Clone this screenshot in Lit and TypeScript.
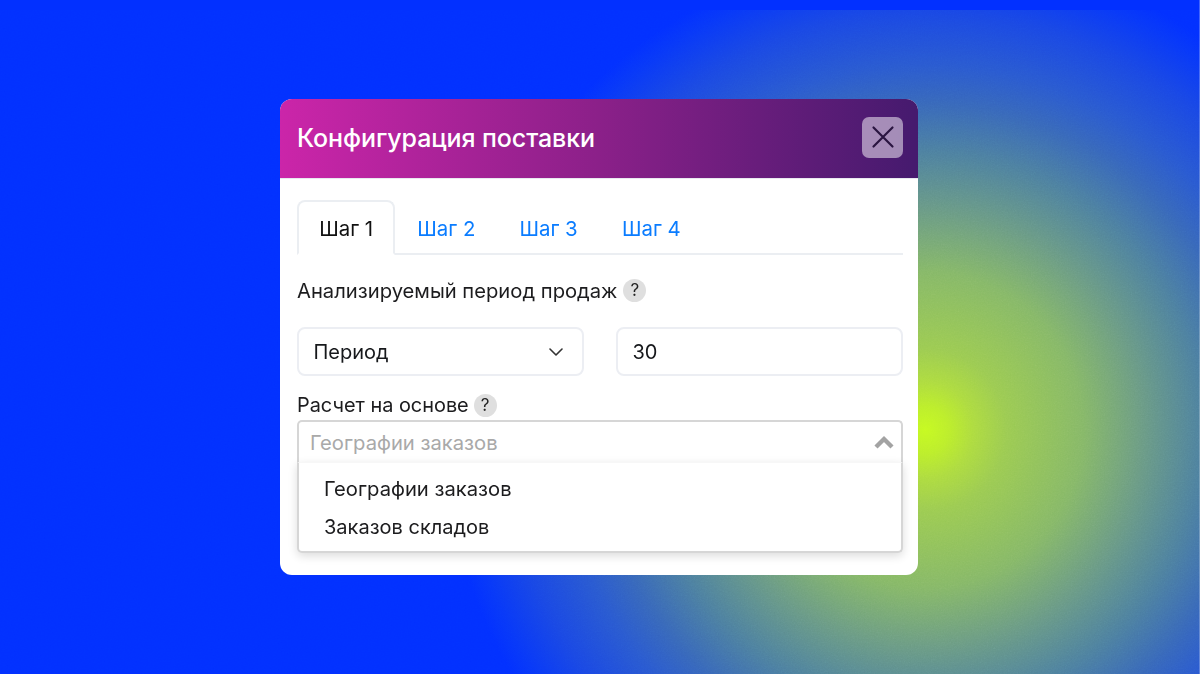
import { LitElement, html, css } from "lit";
import { customElement } from "lit/decorators.js";

@customElement("app-root")
export class AppRoot extends LitElement {
  static styles = css`
    :host { display: block; width: 1200px; height: 674px; overflow: hidden; }
    * { box-sizing: border-box; }
    .page {
      width: 1200px; height: 674px; position: relative;
      display: flex; justify-content: flex-start; align-items: flex-start;
      padding: 99px 0 0 280px;
      background:
        radial-gradient(circle 480px at 925px 430px, #c6fa22 0%, #bcee2c 5%, #aedc40 10%, #9ccb52 17%, #86b868 33%, #6c9c84 45%, #4d80a0 58%, #3868ba 68%, #2a5ad0 76%, #1a48e4 87%, #0838f8 96%, #0230ff 100%),
        #0230ff;
      font-family: Inter, "Noto Sans", sans-serif;
    }
    .noise { position: absolute; inset: 0; width: 100%; height: 100%; opacity: 0.12; mix-blend-mode: overlay; }
    .band { position: absolute; left: 0; right: 0; top: 0; height: 10px; background: #0230ff; }
    .edge { position: absolute; right: 0; top: 0; bottom: 0; width: 1px; background: rgba(255,255,255,0.25); }
    .modal {
      position: relative; width: 638px; height: 476px; background: #fff; border-radius: 12px;
      display: flex; flex-direction: column; overflow: hidden;
    }
    .head {
      height: 80px; flex: none; display: flex; align-items: center; justify-content: space-between;
      padding: 0 15px 1px 17px; color: #fff;
      background: linear-gradient(90deg, #cb25a9 0%, #8b2089 50%, #451a6e 100%);
      border-bottom: 1px solid #e8e9f0;
    }
    .title { font-size: 25px; font-weight: 500; letter-spacing: -0.1px; }
    .close {
      width: 41px; height: 41px; border-radius: 7px; background: rgba(255,255,255,0.5); margin-bottom: 2px;
      display: flex; align-items: center; justify-content: center;
    }
    .close svg { width: 26px; height: 26px; display: block; }
    .body { padding: 21px 15px 0 17px; flex: 1; display: flex; flex-direction: column; }
    .tabs { display: flex; height: 55px; border-bottom: 2px solid #ebeef2; }
    .tab {
      height: 55px; padding: 1px 20px 0 20.2px; display: flex; align-items: center; font-size: 20.4px; color: #0a7cff;
      border: 2px solid transparent; border-radius: 8px 8px 0 0;
    }
    .tab.active { color: #111; border-color: #ebeef2; border-bottom-color: #fff; }
    .label { display: flex; align-items: center; gap: 6px; font-size: 20.2px; color: #1c1c1e; height: 24px; }
    .q {
      width: 23px; height: 23px; border-radius: 50%; background: #dfdfdf; color: #222; font-size: 17px; font-weight: 400;
      display: flex; align-items: center; justify-content: center;
    }
    .l1 { margin-top: 23px; }
    .row { display: grid; grid-template-columns: 287px 287px; gap: 32px; margin-top: 25px; }
    .field {
      height: 49px; border: 2px solid #eceef3; border-radius: 8px; display: flex; align-items: center;
      justify-content: space-between; font-size: 20px; color: #16181b; padding: 0 19px 0 14.5px;
    }
    .field svg { width: 14px; height: 8px; display: block; }
    .l2 { margin-top: 17px; font-size: 19.9px; gap: 5px; }
    .combo { position: relative; margin-top: 3px; height: 132px; }
    .control {
      height: 44px; border: 2px solid #d6d6d6; border-bottom: none; border-radius: 5px 5px 0 0; padding: 0 6px 2px 11px;
      display: flex; align-items: center; justify-content: space-between; color: #a9a9a9; font-size: 20.2px;
      background: #fff;
    }
    .control svg { width: 22px; height: 14px; display: block; }
    .menu {
      position: absolute; left: 0; right: 0; top: 42px; height: 91px; background: #fff; border-radius: 0 0 5px 5px;
      border: 2px solid #d6d6d6; border-top: 1px solid #f7f7f7;
      box-shadow: 0 3px 10px rgba(0,0,0,0.14);
      padding: 6px 0 0 25px; font-size: 20.2px; color: #1c1c1e;
    }
    .item { height: 38.5px; display: flex; align-items: center; }
    .item.alt { font-size: 20px; }
  `;

  render() {
    return html`
      <div class="page">
        <svg class="noise" aria-hidden="true">
          <filter id="n"><feTurbulence type="fractalNoise" baseFrequency="0.7" numOctaves="2" stitchTiles="stitch"></feTurbulence><feColorMatrix type="saturate" values="0"></feColorMatrix></filter>
          <rect width="100%" height="100%" filter="url(#n)"></rect>
        </svg>
        <div class="band"></div>
        <div class="edge"></div>
        <div class="modal">
          <div class="head">
            <div class="title">Конфигурация поставки</div>
            <div class="close">
              <svg viewBox="0 0 26 26" fill="none" stroke="#2a1540" stroke-width="2.2" stroke-linecap="round"><path d="M3.5 3.5 L22.5 22.5 M22.5 3.5 L3.5 22.5"></path></svg>
            </div>
          </div>
          <div class="body">
            <div class="tabs">
              <div class="tab active">Шаг 1</div>
              <div class="tab">Шаг 2</div>
              <div class="tab">Шаг 3</div>
              <div class="tab">Шаг 4</div>
            </div>
            <div class="label l1">Анализируемый период продаж <span class="q">?</span></div>
            <div class="row">
              <div class="field">Период
                <svg viewBox="0 0 14 8" fill="none" stroke="#333" stroke-width="1.6" stroke-linecap="round" stroke-linejoin="round"><path d="M1 1 L7 7 L13 1"></path></svg>
              </div>
              <div class="field">30</div>
            </div>
            <div class="label l2">Расчет на основе <span class="q">?</span></div>
            <div class="combo">
              <div class="control">Географии заказов
                <svg viewBox="0 0 22 14" fill="none" stroke="#a3a3a3" stroke-width="4.4" stroke-linejoin="miter"><path d="M3 12 L11 4 L19 12"></path></svg>
              </div>
              <div class="menu">
                <div class="item">Географии заказов</div>
                <div class="item alt">Заказов складов</div>
              </div>
            </div>
          </div>
        </div>
      </div>
    `;
  }
}
